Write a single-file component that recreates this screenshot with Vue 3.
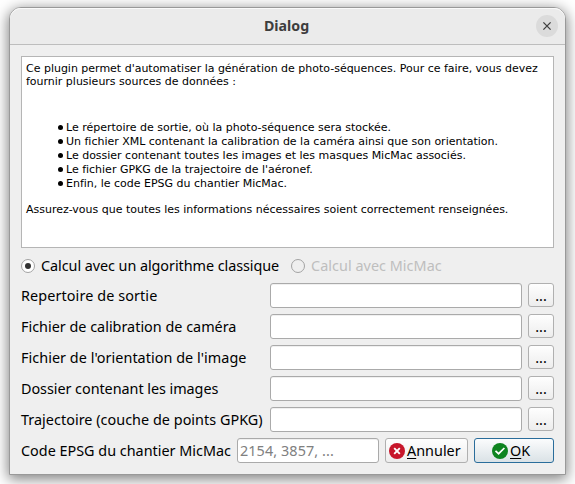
<script setup>
import { ref } from 'vue'

const mode = ref('classic')
const hints = [
  'Le répertoire de sortie, où la photo-séquence sera stockée.',
  'Un fichier XML contenant la calibration de la caméra ainsi que son orientation.',
  'Le dossier contenant toutes les images et les masques MicMac associés.',
  "Le fichier GPKG de la trajectoire de l'aéronef.",
  'Enfin, le code EPSG du chantier MicMac.',
]
const fields = [
  { label: 'Repertoire de sortie', key: 'output' },
  { label: 'Fichier de calibration de caméra', key: 'calibration' },
  { label: "Fichier de l'orientation de l'image", key: 'orientation' },
  { label: 'Dossier contenant les images', key: 'images' },
  { label: 'Trajectoire (couche de points GPKG)', key: 'path' },
]
</script>

<template>
  <div class="desktop">
    <section class="dialog">
      <header class="titlebar">
        <span class="title">Dialog</span>
        <button class="close">
          <svg width="22" height="22" viewBox="0 0 22 22">
            <path d="M7.4 7.4 L14.6 14.6 M14.6 7.4 L7.4 14.6" stroke="#3d3d3d" stroke-width="1.3" fill="none" />
          </svg>
        </button>
      </header>
      <div class="content">
        <div class="browser">
          <p>Ce plugin permet d'automatiser la génération de photo-séquences. Pour ce faire, vous devez<br>fournir plusieurs sources de données :</p>
          <ul>
            <li v-for="h in hints" :key="h"><i class="dot"></i><span>{{ h }}</span></li>
          </ul>
          <p>Assurez-vous que toutes les informations nécessaires soient correctement renseignées.</p>
        </div>
        <div class="modes">
          <label class="mode classic">
            <i class="radio" :class="{ on: mode === 'classic' }"></i><span class="t">Calcul avec un algorithme classique</span>
          </label>
          <label class="mode micmac">
            <i class="radio"></i><span class="t">Calcul avec MicMac</span>
          </label>
        </div>
        <div class="fields">
          <div v-for="f in fields" :key="f.key" class="row">
            <span class="label"><span class="t" :class="f.key">{{ f.label }}</span></span>
            <input class="box" type="text">
            <button class="btn browse"><span>...</span></button>
          </div>
        </div>
        <div class="row bottom">
          <span class="label"><span class="t epsg">Code EPSG du chantier MicMac</span></span>
          <div class="box code"><span class="t">2154, 3857, ...</span></div>
          <button class="btn cancel">
            <svg width="16" height="16" viewBox="0 0 16 16">
              <circle cx="8" cy="8" r="8" fill="#c7162b" />
              <path d="M5.2 5.2 L10.8 10.8 M10.8 5.2 L5.2 10.8" stroke="#fff" stroke-width="1.9" fill="none" />
            </svg>
            <span class="t"><u>A</u>nnuler</span>
          </button>
          <button class="btn ok">
            <svg width="16" height="16" viewBox="0 0 16 16">
              <circle cx="8" cy="8" r="8" fill="#0e8420" />
              <path d="M3.5 7.8 L6.6 10.7 L12.4 5" stroke="#fff" stroke-width="1.7" fill="none" />
            </svg>
            <span class="t"><u>O</u>K</span>
          </button>
        </div>
      </div>
    </section>
  </div>
</template>

<style>
body { margin: 0; background: #fff; overflow: hidden; }
</style>

<style scoped>
* { box-sizing: border-box; }
.desktop {
  width: 575px; height: 484px; padding: 7px 9px 9px; overflow: hidden;
  font-family: "Noto Sans", "Open Sans", sans-serif; font-size: 14.4px; color: #000;
}
.dialog {
  width: 557px; height: 468px; background: #efefef; border: 1px solid #999;
  border-radius: 12px 12px 0 0; overflow: visible;
  box-shadow: 0 3px 14px 1px rgba(0, 0, 0, .5);
}
.titlebar {
  height: 37px; display: flex; align-items: center; justify-content: flex-end;
  background: #ebebeb; border-bottom: 1px solid #bdbdbd; border-radius: 11px 11px 0 0;
  box-shadow: inset 0 1px 0 #fafafa; padding-right: 7px;
}
.title { flex: 1; text-align: center; padding-left: 27px; font-weight: 700; font-size: 14.2px; line-height: 20px; color: #3d3d3d; }
.close { width: 22px; height: 22px; padding: 0; border: 0; border-radius: 50%; background: #dbdbdb; display: flex; }
.content { padding: 11px 11px 0; }
.browser {
  height: 192px; background: #fff; border: 1px solid #b5b5b5; padding: 5px 4px;
  font: 11px/13px "DejaVu Sans", sans-serif; letter-spacing: -0.01px;
}
.browser p { margin: 0; white-space: nowrap; }
.browser ul { list-style: none; margin: 32px 0 13px; padding: 0 0 0 32px; }
.browser li { display: flex; align-items: center; height: 14px; white-space: nowrap; }
.dot { width: 5px; height: 5px; border-radius: 50%; background: #000; margin-right: 3px; }
.modes { display: flex; height: 35px; align-items: center; }
.mode { display: flex; align-items: center; }
.classic { width: 270px; letter-spacing: -0.06px; }
.micmac { color: #bebebe; letter-spacing: 0.04px; }
.radio { width: 14px; height: 14px; border: 1px solid #a3a3a3; border-radius: 50%; margin-right: 6px; display: flex; align-items: center; justify-content: center; }
.radio.on { background: #fff; }
.radio.on::after { content: ""; width: 6px; height: 6px; border-radius: 50%; background: #333; }
.t { white-space: nowrap; line-height: 20px; }
.output { letter-spacing: 0.1px; }
.orientation { letter-spacing: 0.04px; }
.images { letter-spacing: -0.05px; }
.path { letter-spacing: 0.03px; }
.fields { display: grid; gap: 6px; margin-bottom: 6px; }
.row { display: flex; align-items: flex-start; height: 25px; }
.label { width: 249px; height: 25px; display: flex; align-items: center; }
.box { width: 252px; height: 25px; border: 1px solid #aaa; border-radius: 3px; background: #fff; padding: 0 2px; margin: 0; box-shadow: inset 0 1px 0 #f0f0f0; outline: 0; }
.btn {
  border: 1px solid #b0b0b0; border-radius: 3px; background: linear-gradient(#fefefe, #ededed);
  font: inherit; color: #000; padding: 0; margin: 0; display: flex; align-items: center;
}
.browse { width: 26px; height: 24px; margin-left: 6px; justify-content: center; }
.bottom .label { width: 216px; }
.code { width: 142px; color: #808080; display: flex; align-items: center; letter-spacing: 0.08px; }
.cancel { width: 83px; height: 25px; margin-left: 6px; padding-left: 3px; gap: 2px; }
.ok { width: 80px; height: 25px; margin-left: 6px; padding-left: 17px; gap: 2px; border-color: #2a6d9b; background: linear-gradient(#fbfcfd, #dae2e6); }
u { text-decoration: underline; text-decoration-thickness: 1px; text-underline-offset: 2px; text-decoration-skip-ink: none; }
</style>
